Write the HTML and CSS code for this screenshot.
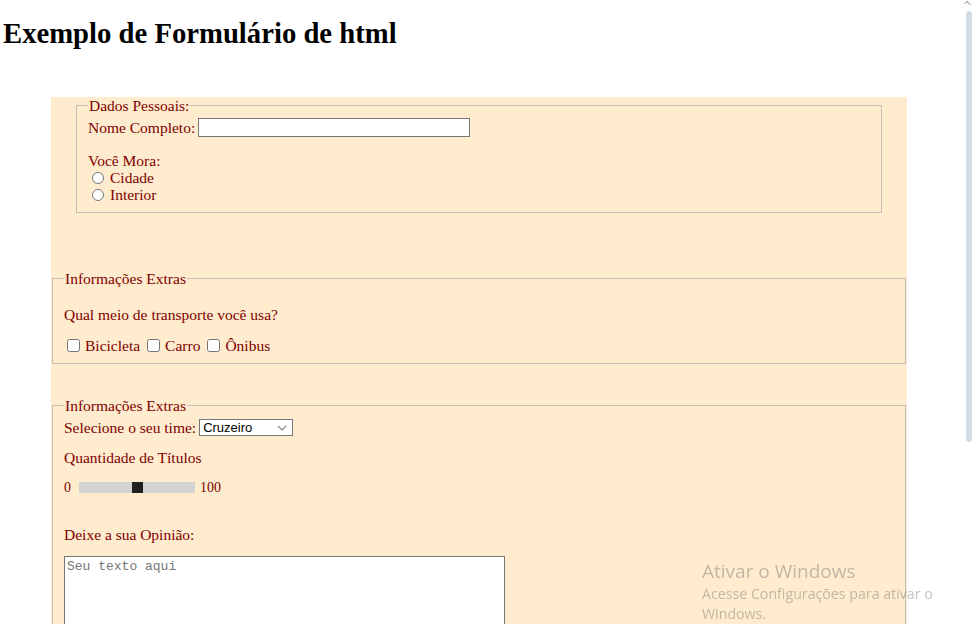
FILE: index.html
```html
<!DOCTYPE html>
<html lang="pt-BR">
<head>
<meta charset="utf-8">
<title>Exemplo de Formulário de html</title>
<link rel="stylesheet" href="styles.css">
</head>
<body>
<h1 class="title">Exemplo de Formulário de html</h1>
<form class="form">
  <fieldset class="fs fs-pessoal">
    <legend class="lg">Dados Pessoais:</legend>
    <div class="row-name">
      <label for="nome">Nome Completo:</label>
      <input class="txt" id="nome" type="text">
    </div>
    <p class="mora">Você Mora:</p>
    <label class="opt"><input class="radio" type="radio" name="mora"> Cidade</label>
    <label class="opt"><input class="radio" type="radio" name="mora"> Interior</label>
  </fieldset>

  <fieldset class="fs fs-wide fs-transp">
    <legend class="lg">Informações Extras</legend>
    <p class="q">Qual meio de transporte você usa?</p>
    <div class="checks">
      <label class="chk"><input class="cbox" type="checkbox"> Bicicleta</label>
      <label class="chk"><input class="cbox" type="checkbox"> Carro</label>
      <label class="chk"><input class="cbox" type="checkbox"> Ônibus</label>
    </div>
  </fieldset>

  <fieldset class="fs fs-wide fs-time">
    <legend class="lg">Informações Extras</legend>
    <div class="row-sel">
      <label for="time">Selecione o seu time:</label>
      <select class="sel" id="time">
        <option>Cruzeiro</option>
        <option>Atlético</option>
        <option>América</option>
      </select>
    </div>
    <p class="qt">Quantidade de Títulos</p>
    <div class="range-row">
      <span class="num">0</span>
      <input class="range" type="range" min="0" max="100" value="50">
      <span class="num">100</span>
    </div>
    <p class="op">Deixe a sua Opinião:</p>
    <textarea class="area" placeholder="Seu texto aqui"></textarea>
  </fieldset>
</form>

<div class="scrollbar">
  <span class="sb-arrow"></span>
  <span class="sb-thumb"></span>
</div>

<div class="watermark">
  <div class="wm-title">Ativar o Windows</div>
  <div class="wm-sub">Acesse Configurações para ativar o<br>Windows.</div>
</div>
</body>
</html>
```

FILE: styles.css
```css
html {
  overflow: hidden;
}
body {
  margin: 0;
  padding: 0 4px;
  background: #ffffff;
  font-family: "Liberation Serif", "Times New Roman", serif;
}
.title {
  font-family: "Liberation Serif", "Times New Roman", serif;
  font-size: 28.7px;
  font-weight: bold;
  line-height: 35px;
  margin: 16px 0 0 -1px;
  color: #000;
}
.form {
  margin: 46px 0 0 47px;
  width: 856px;
  background: #ffebcd;
  padding: 0 0 40px 0;
  color: #800000;
  font-family: "Liberation Serif", "Times New Roman", serif;
  font-size: 15.5px;
  line-height: 17px;
}
.fs {
  border: 1px solid #c3bdb5;
  margin: 0;
  padding: 4px 11px 9px 11px;
  min-width: 0;
}
.fs-pessoal {
  margin: 0 25px 0 25px;
}
.fs-wide {
  margin-left: 1px;
  margin-right: 1px;
}
.fs-transp {
  margin-top: 57px;
}
.fs-time {
  margin-top: 33px;
  padding-bottom: 60px;
}
.lg {
  padding: 0 1px;
  line-height: 17px;
}
.row-name {
  display: flex;
  align-items: center;
  height: 19px;
}
.row-name label {
  margin-right: 3px;
}
.txt {
  box-sizing: border-box;
  width: 272px;
  height: 19px;
  margin: 0;
  border: 1px solid #767676;
  background: #fff;
  padding: 0 2px;
}
.mora {
  margin: 15px 0 0 0;
}
.opt {
  display: flex;
  align-items: center;
  height: 17px;
}
.radio {
  margin: 0 6px 0 4px;
  width: 12px;
  height: 12px;
}
.q {
  margin: 15px 0 0 0;
}
.checks {
  display: flex;
  align-items: center;
  height: 17px;
  margin-top: 14px;
}
.chk {
  display: flex;
  align-items: center;
  margin-right: 4px;
}
.cbox {
  margin: 0 5px 0 3px;
  width: 13px;
  height: 13px;
}
.row-sel {
  display: flex;
  align-items: center;
  margin-top: 1px;
  height: 17px;
}
.row-sel label {
  margin-right: 3px;
}
.sel {
  -webkit-appearance: none;
  appearance: none;
  box-sizing: border-box;
  width: 94px;
  height: 17px;
  margin: 0;
  font-family: "Liberation Sans", Arial, sans-serif;
  font-size: 13px;
  line-height: 15px;
  color: #000;
  background-color: #fff;
  background-image: url("data:image/svg+xml,%3Csvg xmlns='http://www.w3.org/2000/svg' width='10' height='6' viewBox='0 0 10 6'%3E%3Cpath d='M1 1l4 4 4-4' fill='none' stroke='%23888' stroke-width='1.2'/%3E%3C/svg%3E");
  background-repeat: no-repeat;
  background-position: right 5px center;
  border: 1px solid #767676;
  border-radius: 0;
  padding: 0 18px 0 3px;
}
.qt {
  margin: 13px 0 0 0;
}
.range-row {
  display: flex;
  align-items: center;
  height: 17px;
  margin-top: 13px;
}
.num {
  font-size: 14px;
}
.range {
  -webkit-appearance: none;
  appearance: none;
  width: 116px;
  height: 11px;
  margin: 0 5px 0 8px;
  background: #d3d3d3;
  padding: 0;
}
.range::-webkit-slider-thumb {
  -webkit-appearance: none;
  appearance: none;
  width: 11px;
  height: 11px;
  background: #202020;
  border: none;
  border-radius: 0;
}
.op {
  margin: 30px 0 0 0;
}
.area {
  display: block;
  box-sizing: border-box;
  width: 441px;
  height: 110px;
  margin-top: 13px;
  border: 1px solid #767676;
  background: #fff;
  padding: 2px 2px;
  font-family: "Liberation Mono", "DejaVu Sans Mono", monospace;
  font-size: 13px;
  resize: both;
}
.area::placeholder {
  color: #757575;
}
.scrollbar {
  position: fixed;
  top: 0;
  right: 0;
  width: 8px;
  height: 624px;
}
.sb-arrow {
  position: absolute;
  top: 2px;
  right: 2px;
  width: 4px;
  height: 3px;
  border-top: 1px solid #a0a0a0;
  border-left: 1px solid #a0a0a0;
  transform: rotate(45deg);
}
.sb-thumb {
  position: absolute;
  top: 11px;
  right: 0;
  width: 6px;
  height: 431px;
  background: #d3dce4;
  border-radius: 3px;
}
.watermark {
  position: fixed;
  left: 702px;
  top: 558px;
  color: rgba(110, 110, 110, 0.42);
  font-family: "Open Sans", "Noto Sans", sans-serif;
}
.wm-title {
  font-size: 19px;
  line-height: 26px;
}
.wm-sub {
  font-size: 14.2px;
  line-height: 20px;
}
```
